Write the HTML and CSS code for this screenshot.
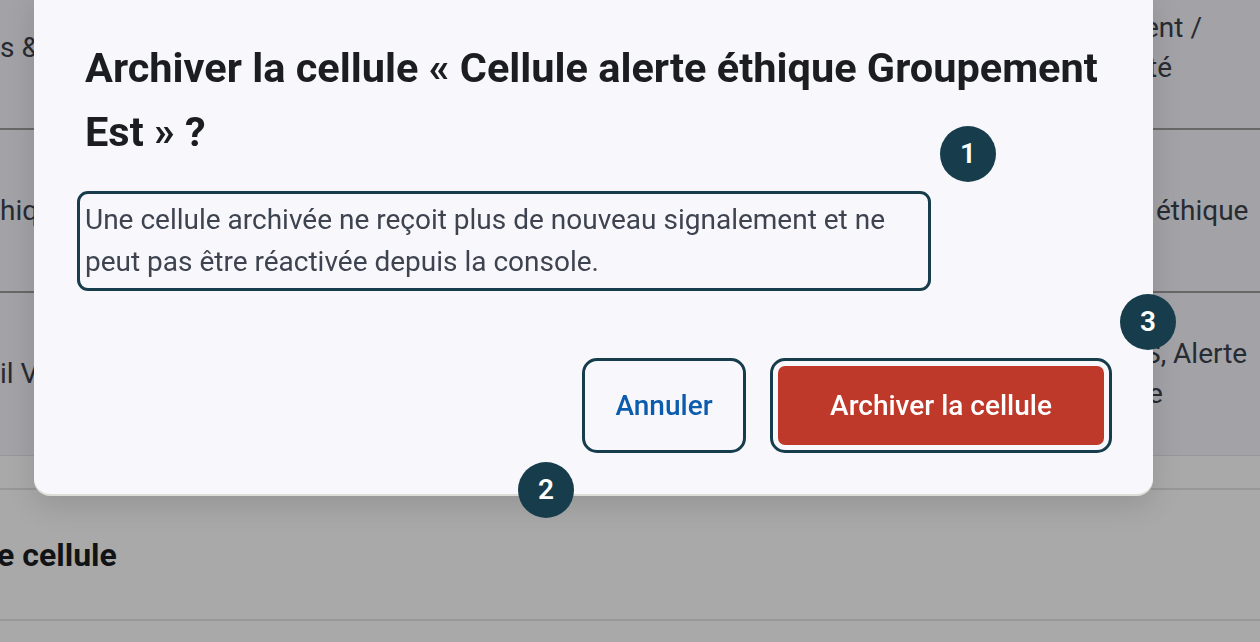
FILE: index.html
```html
<!DOCTYPE html>
<html lang="fr">
<head>
    <meta charset="UTF-8">
    <title>Cellules d'alerte</title>
    <link rel="stylesheet" href="styles.css">
</head>
<body>
    <!-- page behind the dialog -->
    <div class="page">
        <div class="table">
            <div class="table-row">
                <div class="cell cell-first">s &amp;</div>
                <div class="cell"></div>
                <div class="cell cell-last">ent /<br><span class="cell-line">té</span></div>
            </div>
            <div class="table-row">
                <div class="cell cell-first">hiq</div>
                <div class="cell"></div>
                <div class="cell cell-last cell-indent">éthique</div>
            </div>
            <div class="table-row">
                <div class="cell cell-first">il V</div>
                <div class="cell"></div>
                <div class="cell cell-last">S, Alerte<br><span class="cell-line">e</span></div>
            </div>
        </div>
        <div class="table-foot"></div>
        <h2 class="section-title">e cellule</h2>
    </div>

    <div class="overlay"></div>

    <div class="modal" role="dialog" aria-labelledby="modal-title">
        <h1 class="modal-title" id="modal-title">Archiver la cellule « Cellule alerte éthique Groupement Est » ?</h1>
        <p class="modal-text">Une cellule archivée ne reçoit plus de nouveau signalement et ne peut pas être réactivée depuis la console.</p>
        <div class="modal-actions">
            <button class="btn btn-ghost" type="button">Annuler</button>
            <button class="btn btn-danger" type="button">Archiver la cellule</button>
        </div>
    </div>

    <!-- numbered markers -->
    <span class="marker marker-1">1</span>
    <span class="marker marker-2">2</span>
    <span class="marker marker-3">3</span>
</body>
</html>
```

FILE: styles.css
```css
*{
    margin: 0;
    padding: 0;
    box-sizing: border-box;
}
body{
    overflow: hidden;
    width: 1260px;
    height: 642px;
    background: #fdfdfd;
    font-family: Roboto, "Noto Sans", sans-serif;
    color: #3b404b;
}

/* page under the overlay */
.page{
    margin-top: -33px;
}
.table-row{
    display: grid;
    grid-template-columns: 80px 1fr 110px;
    align-items: center;
    height: 163px;
    background: #f3f3f9;
    border-bottom: 2px solid #9c9c9c;
}
.table-row:last-child{
    border-bottom: 1px solid #e2e2e2;
}
.cell{
    font-size: 28px;
    line-height: 40px;
    white-space: nowrap;
}
.cell-last{
    margin-left: -6px;
}
.cell-line{
    padding-left: 4px;
}
.cell-indent{
    padding-left: 12px;
}
.table-foot{
    height: 34px;
    border-bottom: 2px solid #e2e2e2;
}
.section-title{
    font-size: 32px;
    font-weight: 700;
    line-height: 40px;
    color: #1b1d22;
    padding: 45px 0 44px 0;
    border-bottom: 2px solid #e2e2e2;
    margin-left: -3px;
}

.overlay{
    position: fixed;
    inset: 0;
    background: rgba(0, 0, 0, 0.33);
}

/* dialog */
.modal{
    position: absolute;
    left: 34px;
    top: -14px;
    width: 1119px;
    padding: 50px 49px 49px 51px;
    background: #f8f8fc;
    border-radius: 16px;
    box-shadow: 0 2px 0 #dddcd6, 0 12px 30px rgba(0, 0, 0, 0.12);
}
.modal-title{
    font-size: 41.5px;
    font-weight: 700;
    line-height: 64px;
    color: #1b1d22;
}
.modal-text{
    width: 838px;
    margin-top: 35px;
    font-size: 28px;
    line-height: 42px;
    color: #3e4350;
    outline: 3px solid #173d4d;
    outline-offset: 5px;
    border-radius: 3px;
}
.modal-actions{
    display: flex;
    justify-content: flex-end;
    gap: 40px;
    margin-top: 83px;
}
.btn{
    height: 79px;
    border: 0;
    border-radius: 7px;
    font-family: inherit;
    font-size: 28px;
    font-weight: 500;
    outline: 3px solid #173d4d;
    outline-offset: 5px;
}
.btn-ghost{
    width: 148px;
    background: transparent;
    color: #0b5cad;
}
.btn-danger{
    width: 326px;
    background: #bf392b;
    color: #ffffff;
}

/* numbered markers */
.marker{
    position: absolute;
    width: 56px;
    height: 56px;
    border-radius: 50%;
    background: #173d4d;
    color: #ffffff;
    font-size: 28px;
    font-weight: 600;
    line-height: 56px;
    text-align: center;
}
.marker-1{
    left: 940px;
    top: 126px;
}
.marker-2{
    left: 518px;
    top: 462px;
}
.marker-3{
    left: 1120px;
    top: 294px;
}
```
